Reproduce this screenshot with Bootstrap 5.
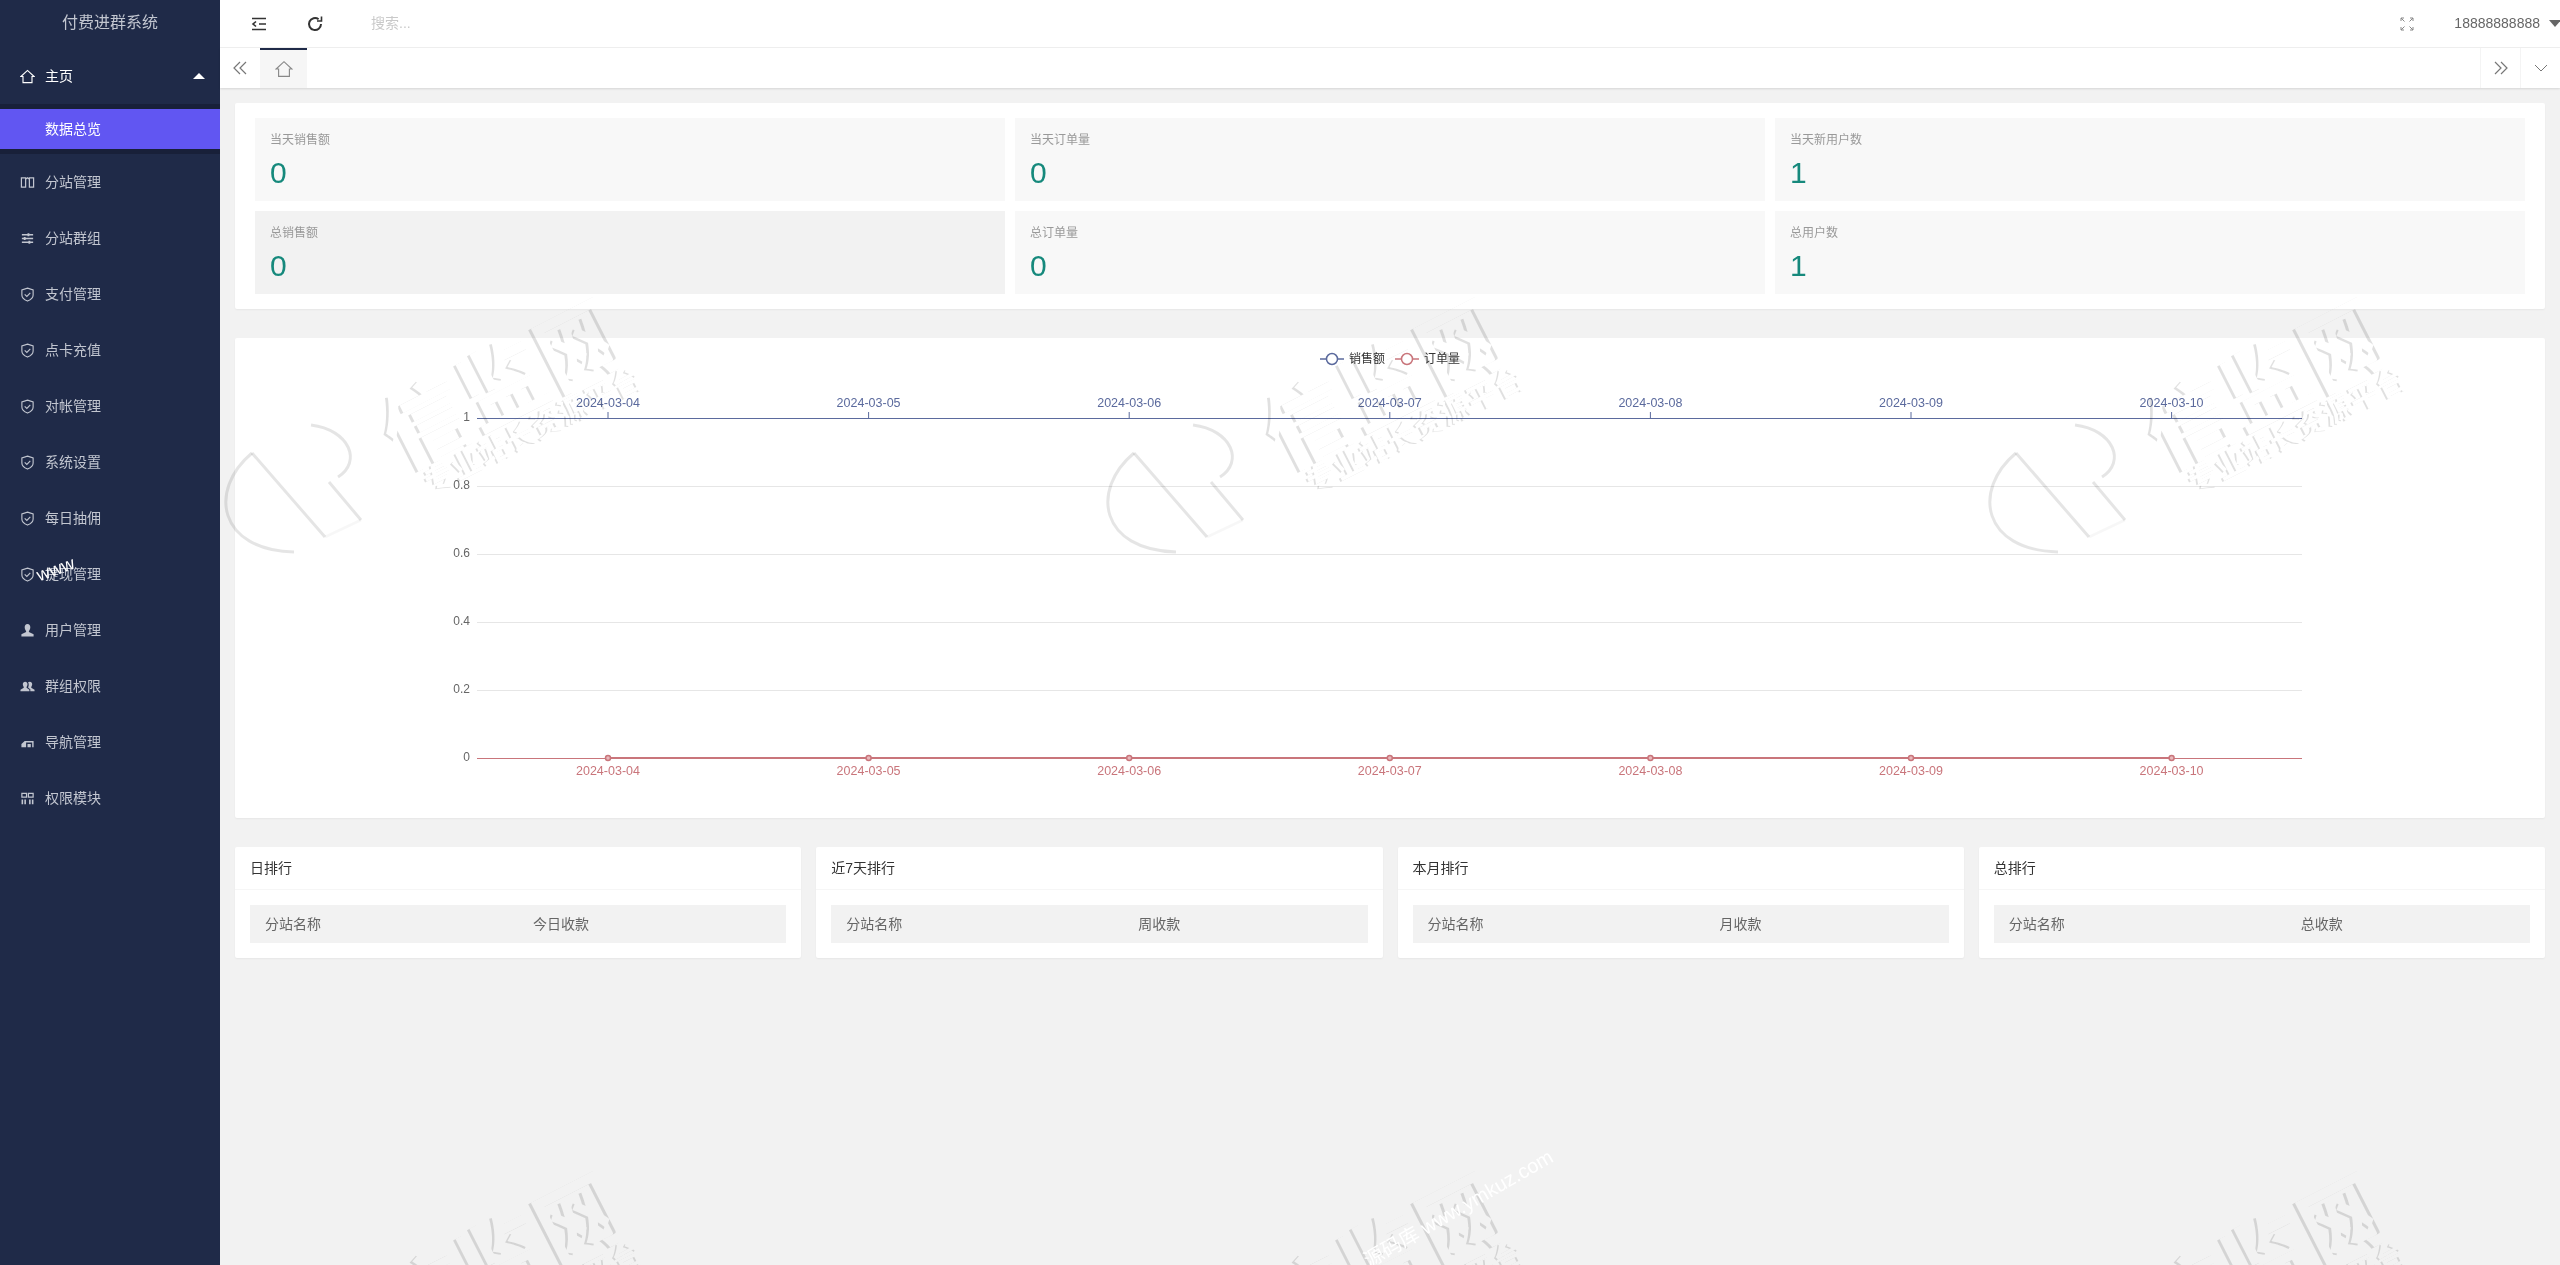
<!DOCTYPE html>
<html lang="zh-CN">
  <head>
    <meta charset="UTF-8" />
    <title>付费进群系统</title>
    <link href="https://cdn.jsdelivr.net/npm/bootstrap@5.3.0/dist/css/bootstrap.min.css" rel="stylesheet" />
    <style>
      html, body { height: 100%; }
      body {
        background-color: #f2f2f2;
        font-family: "Liberation Sans", "Noto Sans CJK SC", sans-serif;
        font-size: 14px;
        color: #666;
        overflow: hidden;
      }
      .side-bar { width: 220px; background-color: #1f2a48; color: #c2c6d0; }
      .side-title { height: 48px; font-size: 16px; color: #c2c6d0; padding-bottom: 2px; }
      .side-item { height: 56px; padding-left: 20px; }
      .side-item svg { width: 15px; height: 15px; margin-right: 10px; flex: none; }
      .side-item.side-open { color: #fff; }
      .side-caret { width: 0; height: 0; border: 6px solid transparent; border-bottom-color: #fff; border-top-width: 0; margin-left: auto; margin-right: 15px; }
      .side-sub { height: 50px; padding: 5px 0; background-color: #182039; }
      .side-active { height: 40px; padding-left: 45px; background-color: #6156f2; color: #fff; }
      .work-area { min-width: 0; }
      .top-bar { height: 48px; background-color: #fff; border-bottom: 1px solid #f0f0f0; padding-left: 30px; }
      .top-icon { width: 18px; height: 18px; color: #333; }
      .top-refresh { margin-left: 38px; }
      .top-search { margin-left: 47px; color: #c9c9c9; font-size: 14px; }
      .top-user { color: #666; font-size: 14px; margin-left: 40px; margin-right: 4px; }
      .top-caret { width: 0; height: 0; border: 6px solid transparent; border-top: 7px solid #666; border-bottom-width: 0; margin-left: 5px; margin-right: -1px; }
      .tab-bar { height: 40px; background-color: #fff; box-shadow: 0 1px 2px rgba(0, 0, 0, 0.12); color: #777; }
      .tab-side { width: 40px; }
      .tab-side-right { width: 40px; border-left: 1px solid #f4f4f4; }
      .tab-home { width: 47px; background-color: #f6f6f6; border-top: 2px solid #1f2a48; }
      .page-body { padding: 15px; gap: 29px; }
      .panel-box { background-color: #fff; border-radius: 2px; box-shadow: 0 1px 2px rgba(0, 0, 0, 0.05); }
      .stat-grid { display: grid; grid-template-columns: repeat(3, 1fr); grid-auto-rows: 83px; gap: 10px; padding: 15px 20px; height: 206px; }
      .stat-box { background-color: #f8f8f8; padding: 13px 15px 0; }
      .stat-box.stat-hover { background-color: #f2f2f2; }
      .stat-label { font-size: 12px; line-height: 18px; color: #999; }
      .stat-value { font-size: 30px; line-height: 36px; color: #16897c; margin-top: 6px; }
      .chart-box { height: 480px; }
      .chart-box svg { display: block; }
      .rank-row { gap: 15px; }
      .rank-box { flex: 1 1 0; height: 111px; }
      .rank-title { height: 43px; padding-left: 15px; color: #333; border-bottom: 1px solid #f6f6f6; }
      .rank-head { margin: 15px 15px 0; height: 38px; background-color: #f2f2f2; color: #666; }
      .rank-head span { padding-left: 15px; }
      .rank-name { width: 268px; }
      .rank-name-wide { width: 292px; }
      /* multiply so the white glyph faces leave the chart labels readable */
      .water-mark { position: absolute; left: 220px; top: 0; pointer-events: none; mix-blend-mode: multiply; }
      .water-line { position: absolute; color: #fff; font-size: 20px; white-space: nowrap; pointer-events: none; transform: rotate(-30deg); transform-origin: left bottom; }
      .water-main { left: 1373px; top: 1245px; }
      .water-side { left: 42px; top: 562px; font-size: 18px; transform: rotate(-20deg); }
      text { font-family: "Liberation Sans", "Noto Sans CJK SC", sans-serif; }
    </style>
  </head>
  <body>
    <div class="d-flex h-100 position-relative">
      <aside class="side-bar flex-shrink-0">
        <div class="side-title d-flex align-items-center justify-content-center">付费进群系统</div>
        <div class="side-item side-open d-flex align-items-center">
          <svg viewBox="0 0 16 16" fill="none" stroke="currentColor" stroke-width="1.2"><path d="M1 8 8 1.5 15 8H12.800V14.500H3.200V8Z" /></svg>
          主页
          <span class="side-caret"></span>
        </div>
        <div class="side-sub"><div class="side-active d-flex align-items-center">数据总览</div></div>
        <div class="side-item d-flex align-items-center">
          <svg viewBox="0 0 16 16" fill="none" stroke="currentColor" stroke-width="1.300"><path d="M1.500 3H6V13H1.500ZM10 3H14.500V13H10ZM6 4.500 8 3 10 4.500" /></svg>
          分站管理
        </div>
        <div class="side-item d-flex align-items-center">
          <svg viewBox="0 0 16 16" fill="none" stroke="currentColor" stroke-width="1.500"><path d="M2 4H14M2 8H14M2 12H14" /><path d="M9 2.500V5.500M5 6.500V9.500M10 10.500V13.500" stroke-width="2" /></svg>
          分站群组
        </div>
        <div class="side-item d-flex align-items-center"><svg viewBox="0 0 16 16"><use href="#icon-shield" /></svg>支付管理</div>
        <div class="side-item d-flex align-items-center"><svg viewBox="0 0 16 16"><use href="#icon-shield" /></svg>点卡充值</div>
        <div class="side-item d-flex align-items-center"><svg viewBox="0 0 16 16"><use href="#icon-shield" /></svg>对帐管理</div>
        <div class="side-item d-flex align-items-center"><svg viewBox="0 0 16 16"><use href="#icon-shield" /></svg>系统设置</div>
        <div class="side-item d-flex align-items-center"><svg viewBox="0 0 16 16"><use href="#icon-shield" /></svg>每日抽佣</div>
        <div class="side-item d-flex align-items-center"><svg viewBox="0 0 16 16"><use href="#icon-shield" /></svg>提现管理</div>
        <div class="side-item d-flex align-items-center">
          <svg viewBox="0 0 16 16" fill="currentColor"><path d="M8 1C10 1 11 2.500 11 4.500 11 6.500 10 7.800 9.500 8.500V9.500L14.500 12V14.500H1.500V12L6.500 9.500V8.500C6 7.800 5 6.500 5 4.500 5 2.500 6 1 8 1Z" /></svg>
          用户管理
        </div>
        <div class="side-item d-flex align-items-center">
          <svg viewBox="0 0 16 16" fill="currentColor"><path d="M5.500 3C7 3 8 4 8 5.700 8 7 7.300 8 7 8.500V9.200L10 11.500V13H0.500V11.500L4 9.200V8.500C3.700 8 3 7 3 5.700 3 4 4 3 5.500 3Z" /><path d="M10.500 3C12 3 13 4 13 5.700 13 7 12.300 8 12 8.500V9.200L15.500 11.500V13H11V11L8.800 9.200V8.500C9.500 7.500 9.500 4 8.500 3.700 9 3.300 9.700 3 10.500 3Z" /></svg>
          群组权限
        </div>
        <div class="side-item d-flex align-items-center">
          <svg viewBox="0 0 16 16" fill="currentColor"><path d="M1.500 13V9.500L5 6.500H14.500V13H13V8H6.500V13ZM8 9.500H11.500V13H8Z" /></svg>
          导航管理
        </div>
        <div class="side-item d-flex align-items-center">
          <svg viewBox="0 0 16 16" fill="none" stroke="currentColor" stroke-width="1.300"><path d="M2 2.500H7V6.500H2ZM9 2.500H14V6.500H9Z" /><path d="M2.500 9V14M5.500 9V14M10.500 9V14M13.500 9V14" stroke-width="1.700" /></svg>
          权限模块
        </div>
      </aside>

      <main class="work-area flex-grow-1 d-flex flex-column">
        <header class="top-bar d-flex align-items-center">
          <svg class="top-icon" viewBox="0 0 18 18" fill="none" stroke="currentColor" stroke-width="1.600"><path d="M2 3.500H16M9 9H16M2 14.500H16" /><path d="M6 6.500 3 9 6 11.500" /></svg>
          <svg class="top-icon top-refresh" viewBox="0 0 18 18" fill="none" stroke="currentColor" stroke-width="2"><path d="M15 9A6 6 0 1 1 12.600 4.200" /><path d="M15.500 1.500V6H11" stroke-width="1.600" /></svg>
          <span class="top-search">搜索...</span>
          <svg class="ms-auto" width="14" height="14" viewBox="0 0 14 14" fill="none" stroke="#888" stroke-width="1"><path d="M1 4V1H4M1 1 4.500 4.500M10 1H13V4M13 1 9.500 4.500M1 10V13H4M1 13 4.500 9.500M13 10V13H10M13 13 9.500 9.500" /></svg>
          <span class="top-user">18888888888</span>
          <span class="top-caret"></span>
        </header>

        <nav class="tab-bar d-flex align-items-stretch">
          <div class="tab-side d-flex align-items-center justify-content-center">
            <svg width="16" height="16" viewBox="0 0 16 16" fill="none" stroke="currentColor" stroke-width="1.200"><path d="M8 2 2 8 8 14M14 2 8 8 14 14" /></svg>
          </div>
          <div class="tab-home d-flex align-items-center justify-content-center">
            <svg width="18" height="18" viewBox="0 0 16 16" fill="none" stroke="#888" stroke-width="1"><path d="M1 8 8 1.500 15 8H12.800V14.500H3.200V8Z" /></svg>
          </div>
          <div class="tab-side-right d-flex align-items-center justify-content-center ms-auto">
            <svg width="16" height="16" viewBox="0 0 16 16" fill="none" stroke="currentColor" stroke-width="1.200"><path d="M2 2 8 8 2 14M8 2 14 8 8 14" /></svg>
          </div>
          <div class="tab-side-right d-flex align-items-center justify-content-center">
            <svg width="16" height="10" viewBox="0 0 16 10" fill="none" stroke="currentColor" stroke-width="1"><path d="M2 2 8 8 14 2" /></svg>
          </div>
        </nav>

        <div class="page-body d-flex flex-column">
          <section class="panel-box stat-grid">
            <div class="stat-box"><div class="stat-label">当天销售额</div><div class="stat-value">0</div></div>
            <div class="stat-box"><div class="stat-label">当天订单量</div><div class="stat-value">0</div></div>
            <div class="stat-box"><div class="stat-label">当天新用户数</div><div class="stat-value">1</div></div>
            <div class="stat-box stat-hover"><div class="stat-label">总销售额</div><div class="stat-value">0</div></div>
            <div class="stat-box"><div class="stat-label">总订单量</div><div class="stat-value">0</div></div>
            <div class="stat-box"><div class="stat-label">总用户数</div><div class="stat-value">1</div></div>
          </section>

          <section class="panel-box chart-box">
            <svg id="chart" width="2310" height="480" viewBox="0 0 2310 480"></svg>
          </section>

          <section class="rank-row d-flex">
            <div class="panel-box rank-box">
              <div class="rank-title d-flex align-items-center">日排行</div>
              <div class="rank-head d-flex align-items-center"><span class="rank-name">分站名称</span><span>今日收款</span></div>
            </div>
            <div class="panel-box rank-box">
              <div class="rank-title d-flex align-items-center">近7天排行</div>
              <div class="rank-head d-flex align-items-center"><span class="rank-name-wide">分站名称</span><span>周收款</span></div>
            </div>
            <div class="panel-box rank-box">
              <div class="rank-title d-flex align-items-center">本月排行</div>
              <div class="rank-head d-flex align-items-center"><span class="rank-name-wide">分站名称</span><span>月收款</span></div>
            </div>
            <div class="panel-box rank-box">
              <div class="rank-title d-flex align-items-center">总排行</div>
              <div class="rank-head d-flex align-items-center"><span class="rank-name-wide">分站名称</span><span>总收款</span></div>
            </div>
          </section>
        </div>
      </main>

      <!-- watermark tile repeated over the work area -->
      <svg class="water-mark" width="2340" height="1265" viewBox="0 0 2340 1265">
        <defs>
          <g id="water-tile">
            <g fill="none" stroke="#000" stroke-opacity="0.1" stroke-width="3">
              <path d="M32 453C-12 490 -2 550 74 552" />
              <path d="M91 425C130 430 142 462 118 477" />
              <path d="M32 453 105 537M109 482 141 520" />
              <path d="M105 537 141 520" stroke-opacity="0.03" />
            </g>
            <g transform="translate(180 472) rotate(-27)">
              <text font-size="86" font-weight="700" fill="#000" fill-opacity="0.12">信监网</text>
              <text x="3" y="0" font-size="86" font-weight="700" fill="#fff">信监网</text>
              <text x="16" y="34" font-size="30" font-weight="700" fill="#000" fill-opacity="0.12">专业站长资源平台</text>
              <text x="18" y="34" font-size="30" font-weight="700" fill="#fff">专业站长资源平台</text>
            </g>
          </g>
        </defs>
        <g id="water-all"></g>
      </svg>
      <div class="water-line water-main">源码库 www.ymkuz.com</div>
      <div class="water-line water-side">www</div>
    </div>

    <svg width="0" height="0" class="position-absolute">
      <symbol id="icon-shield" viewBox="0 0 16 16">
        <path d="M8 1.200 14 3.200V8.500C14 11.500 11 13.800 8 15 5 13.800 2 11.500 2 8.500V3.200Z" fill="none" stroke="currentColor" stroke-width="1.200" />
        <path d="M5 7.800 7.300 10 11 6.200" fill="none" stroke="currentColor" stroke-width="1.200" />
      </symbol>
    </svg>

    <script>
      function drawChart() {
        const svg = document.querySelector("#chart");
        const blue = "#5b6a9d";
        const red = "#c9757b";
        const left = 242;
        const right = 2067;
        const top = 80;
        const step = 68;
        const firstTick = 373;
        const tickGap = 260.6;
        let out = "";

        // grid lines and y labels
        ["1", "0.8", "0.6", "0.4", "0.2", "0"].forEach((label, i) => {
          const y = top + i * step;
          if (i > 0 && i < 5) {
            out += `<line x1="${left}" x2="${right}" y1="${y + 0.5}" y2="${y + 0.5}" stroke="#e6e6e6" />`;
          }
          out += `<text x="235" y="${y + 3}" text-anchor="end" font-size="12" fill="#666">${label}</text>`;
        });
        out += `<line x1="${left}" x2="${right}" y1="${top + 0.5}" y2="${top + 0.5}" stroke="${blue}" />`;
        out += `<line x1="${left}" x2="${right}" y1="${top + 340.5}" y2="${top + 340.5}" stroke="${red}" />`;
        // the series itself, both sit on zero
        out += `<line x1="${firstTick}" x2="${firstTick + 6 * tickGap}" y1="${top + 340}" y2="${top + 340}" stroke="${red}" stroke-width="2" />`;

        // two x axes, one on top for sales, one below for orders
        ["04", "05", "06", "07", "08", "09", "10"].forEach((day, i) => {
          const x = firstTick + i * tickGap;
          const date = `2024-03-${day}`;
          out += `<line x1="${x}" x2="${x}" y1="${top - 6}" y2="${top}" stroke="${blue}" />`;
          out += `<text x="${x}" y="${top - 11}" text-anchor="middle" font-size="12.500" fill="${blue}">${date}</text>`;
          out += `<circle cx="${x}" cy="${top + 340}" r="2.500" fill="#e9b9bc" stroke="${red}" stroke-width="1.500" />`;
          out += `<text x="${x}" y="${top + 357}" text-anchor="middle" font-size="12.500" fill="${red}">${date}</text>`;
        });

        // legend
        [[1085, blue, "销售额"], [1160, red, "订单量"]].forEach(([x, color, name]) => {
          out += `<line x1="${x}" x2="${x + 24}" y1="21" y2="21" stroke="${color}" stroke-width="1.500" />`;
          out += `<circle cx="${x + 12}" cy="21" r="5.500" fill="#fff" stroke="${color}" stroke-width="1.500" />`;
          out += `<text x="${x + 29}" y="25" font-size="12" fill="#333">${name}</text>`;
        });
        svg.innerHTML = out;

        // lay the watermark tile out on its 882 x 874 period
        let tiles = "";
        for (let col = 0; col < 3; col++) {
          for (let row = 0; row < 2; row++) {
            tiles += `<use href="#water-tile" x="${col * 882}" y="${row * 874}" />`;
          }
        }
        document.querySelector("#water-all").innerHTML = tiles;
      }
      window.onload = drawChart;
    </script>
    <script src="https://cdn.jsdelivr.net/npm/bootstrap@5.3.0/dist/js/bootstrap.bundle.min.js"></script>
  </body>
</html>
